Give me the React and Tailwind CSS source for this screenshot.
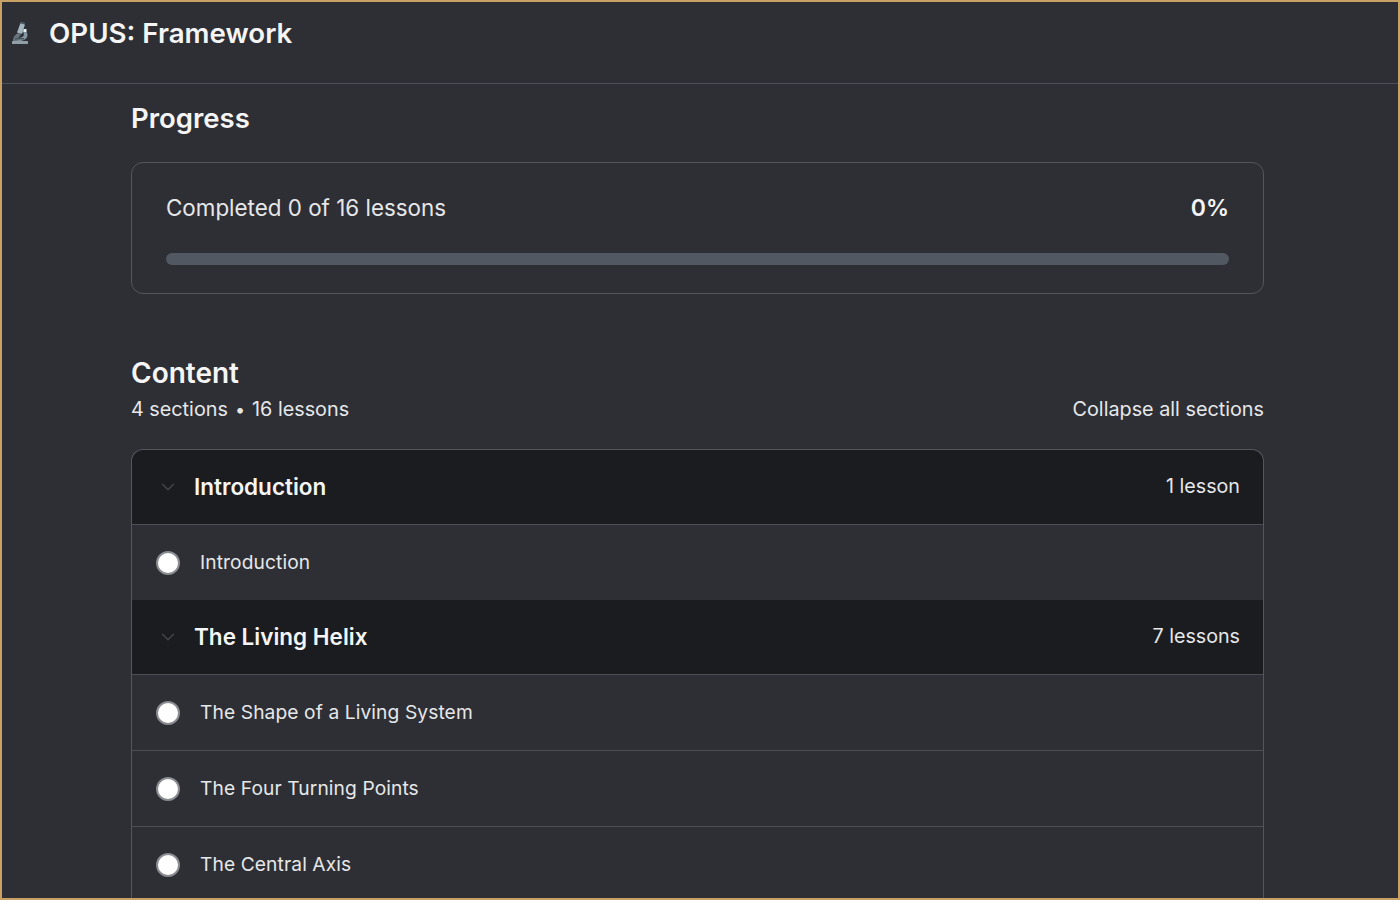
import React from 'react';
import { ChevronDown } from 'lucide-react';

const SECTIONS = [
  { title: 'Introduction', count: '1 lesson', lessons: ['Introduction'] },
  {
    title: 'The Living Helix',
    count: '7 lessons',
    lessons: ['The Shape of a Living System', 'The Four Turning Points', 'The Central Axis'],
  },
];

function Microscope() {
  return (
    <svg width="18" height="24" viewBox="0 0 18 24" className="mt-[9px] shrink-0">
      <path d="M2 20 C2 16 4 13 8 12 L10 14 C8 15 7 17 7 20 Z" fill="#66767f" />
      <path d="M7 20 C12 20 16.500 18 16.500 14 C16.500 11 14 9.500 12.500 9 L12 11 C13 12 13.500 14 12 15.500 C10.500 17 8 17 6 17 Z" fill="#8496a0" />
      <path d="M9.500 2 L14 3.500 L11 13 L6 11.500 Z" fill="#a3b5be" />
      <path d="M10 0.500 L14 1.800 L13.600 3.600 L9.500 2.300 Z" fill="#4d5a62" />
      <rect x="12.500" y="8" width="3" height="3" fill="#e6ecef" />
      <rect x="4" y="17" width="9" height="1.500" fill="#4a565d" />
      <rect x="1" y="20" width="16" height="3" rx="0.500" fill="#8f9ea7" />
    </svg>
  );
}

function LessonRow({ title, last }) {
  return (
    <div className={`flex items-center pl-[24px] ${last ? 'h-[75px]' : 'h-[76px] border-b border-[#4b4e55]'}`}>
      <span className="h-[24px] w-[24px] shrink-0 rounded-full border-2 border-[#8a8c92] bg-white" />
      <span className="ml-[20px] text-[19.200px] tracking-[0.1px] text-[#e6e7e9]">{title}</span>
    </div>
  );
}

function Section({ section, first }) {
  return (
    <div>
      <div className={`flex h-[75px] items-center justify-between border-b border-[#4b4e55] bg-[#1b1c20] pr-[23px] pl-[25px] ${first ? 'rounded-t-xl' : ''}`}>
        <div className="flex items-center">
          <ChevronDown size={22} strokeWidth={1.5} className="text-[#44464c]" />
          <span className="ml-[15px] text-[22.500px] font-semibold text-[#f5f5f6]">{section.title}</span>
        </div>
        <span className="text-[19.700px] text-[#e6e7e9]">{section.count}</span>
      </div>
      {section.lessons.map((lesson, i) => (
        <LessonRow key={lesson} title={lesson} last={first && i === section.lessons.length - 1} />
      ))}
    </div>
  );
}

export default function App() {
  return (
    <div className="h-screen overflow-hidden border-2 border-[#c8a264] bg-[#2e2f35] font-['Inter',sans-serif]">
      <header className="flex h-[82px] items-start gap-[20px] border-b border-[#4a515c] pt-[10px] pl-[9px]">
        <Microscope />
        <h1 className="text-[27.700px] leading-[42px] font-semibold text-[#f5f5f6]">OPUS: Framework</h1>
      </header>

      <main className="mr-[134px] ml-[129px]">
        <h2 className="mt-[15px] text-[27.500px] leading-[38px] font-semibold text-[#f5f5f6]">Progress</h2>

        <div className="mt-[25px] h-[132px] rounded-xl border border-[#53565c] px-[34px] pt-[30px]">
          <div className="flex items-center justify-between">
            <span className="text-[22.400px] leading-[30px] text-[#e6e7e9]">Completed 0 of 16 lessons</span>
            <span className="text-[23px] leading-[30px] font-semibold text-[#f5f5f6]">0%</span>
          </div>
          <div className="mt-[30px] h-[12px] rounded-md bg-[#525862]" />
        </div>

        <h2 className="mt-[59px] text-[28px] leading-[40px] font-semibold text-[#f5f5f6]">Content</h2>
        <div className="mt-[2px] flex items-center justify-between text-[19.800px] leading-[28px] text-[#e6e7e9]">
          <span>
            4 sections
            <span className="mx-[7px] text-[18px] leading-none">•</span>
            16 lessons
          </span>
          <span>Collapse all sections</span>
        </div>

        <div className="mt-[26px] rounded-t-xl border border-b-0 border-[#53565c]">
          {SECTIONS.map((section, i) => (
            <Section key={section.title} section={section} first={i === 0} />
          ))}
        </div>
      </main>
    </div>
  );
}
